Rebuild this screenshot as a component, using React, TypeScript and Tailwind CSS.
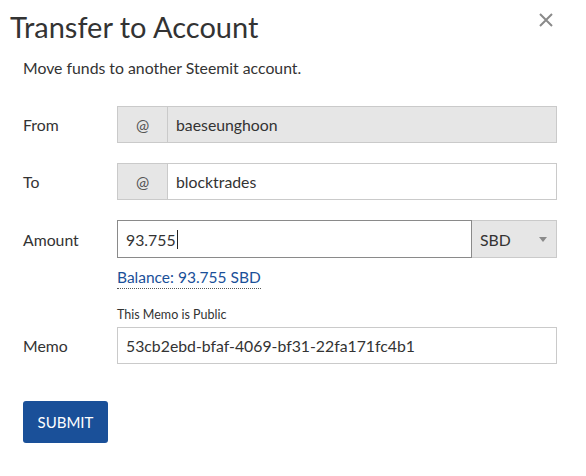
const font = { fontFamily: 'Lato, "Liberation Sans", sans-serif' }

const Label = ({ children }: { children: React.ReactNode }) => (
  <div className="w-[94px] shrink-0 text-[15.8px] text-[#333]">{children}</div>
)

const AtField = ({ value, disabled }: { value: string; disabled?: boolean }) => (
  <div className="flex h-[37px] flex-1 border border-[#cacaca] text-[15.8px] text-[#333]">
    <div className="flex w-[50px] shrink-0 items-center justify-center border-r border-[#cacaca] bg-[#e6e6e6] text-[#555]">
      @
    </div>
    <div className={`flex flex-1 items-center px-2 ${disabled ? 'bg-[#e6e6e6]' : 'bg-white'}`}>{value}</div>
  </div>
)

export default function App() {
  return (
    <div className="relative h-[476px] w-[586px] bg-white text-[#333]" style={font}>
      <button
        aria-label="Close"
        className="absolute right-[32px] top-[12px] flex h-[16px] w-[16px] items-center justify-center text-[#8a8a8a]"
        type="button"
      >
        <svg className="h-[16px] w-[16px]" fill="none" stroke="currentColor" strokeWidth="2" viewBox="0 0 16 16">
          <path d="M2 2l12 12M14 2L2 14" />
        </svg>
      </button>

      <h1 className="pl-[10px] pt-[10px] text-[29px] leading-[1.2] font-normal text-[#333]">Transfer to Account</h1>
      <p className="mt-[11px] pl-[23px] text-[15.8px] leading-[1.5]">Move funds to another Steemit account.</p>

      <div className="mt-[27px] flex flex-col pl-[23px] pr-[29px]">
        <div className="flex items-center">
          <Label>From</Label>
          <AtField disabled value="baeseunghoon" />
        </div>

        <div className="mt-[20px] flex items-center">
          <Label>To</Label>
          <AtField value="blocktrades" />
        </div>

        <div className="mt-[20px] flex items-center">
          <Label>Amount</Label>
          <div className="flex h-[38px] flex-1 text-[15.8px]">
            <div className="flex flex-1 items-center border border-[#8a8a8a] bg-white px-2">
              93.755
              <span className="ml-[1px] inline-block h-[19px] w-[1px] bg-[#222]" />
            </div>
            <div className="flex w-[85px] items-center justify-between border border-l-0 border-[#cacaca] bg-[#e6e6e6] pl-2 pr-[9px]">
              <span>SBD</span>
              <svg className="h-[5px] w-[8px]" viewBox="0 0 8 5" fill="#8a8a8a">
                <path d="M0 0h8L4 5z" />
              </svg>
            </div>
          </div>
        </div>

        <div className="ml-[94px] mt-[9px] flex">
          <span className="border-b border-dotted border-[#555] pb-[1px] text-[15.5px] leading-[20px] text-[#1a5099]">
            Balance: 93.755 SBD
          </span>
        </div>

        <div className="ml-[94px] mt-[18px] text-[12.5px] leading-[15px]">This Memo is Public</div>

        <div className="mt-[5px] flex items-center">
          <Label>Memo</Label>
          <div className="flex h-[37px] flex-1 items-center border border-[#cacaca] bg-white px-2 text-[15.8px]">
            53cb2ebd-bfaf-4069-bf31-22fa171fc4b1
          </div>
        </div>

        <div className="mt-[37px]">
          <button
            className="h-[42px] w-[85px] rounded-[3px] bg-[#1a5099] text-[15px] text-white uppercase"
            type="button"
          >
            Submit
          </button>
        </div>
      </div>
    </div>
  )
}
